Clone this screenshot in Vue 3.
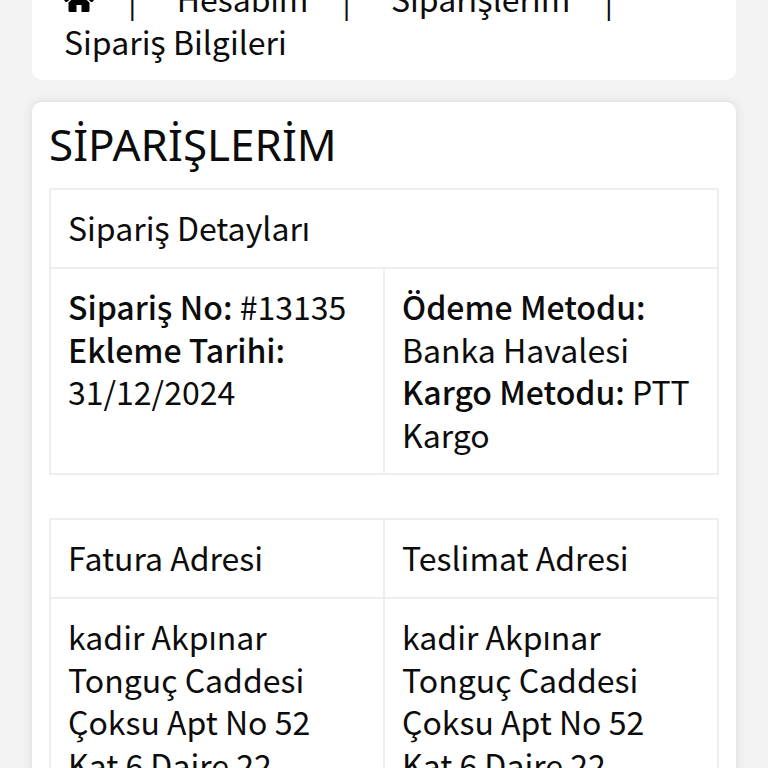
<script setup>
const crumbs = ['Hesabım', 'Siparişlerim', 'Sipariş Bilgileri']

const info = [
    [
        { label: 'Sipariş No:', value: '#13135' },
        { label: 'Ekleme Tarihi:', value: '31/12/2024' },
    ],
    [
        { label: 'Ödeme Metodu:', value: 'Banka Havalesi' },
        { label: 'Kargo Metodu:', value: 'PTT Kargo' },
    ],
]

const address = ['kadir Akpınar', 'Tonguç Caddesi', 'Çoksu Apt No 52', 'Kat 6 Daire 22']
</script>

<template>
    <div class="page">
        <nav class="breadcrumb">
            <ul>
                <li>
                    <a href="#" aria-label="Anasayfa">
                        <svg class="home" viewBox="0 0 30 26">
                            <path d="M15 1 L0 14 L1.500 16 L3 16 L15 5.500 L27 16 L28.500 16 L30 14 L25 9.500 V2 H21 V6 Z" />
                            <path d="M15 7 L4.500 16.500 V24.500 Q4.500 26 6 26 H12.500 V19 H17.500 V26 H24 Q25.500 26 25.500 24.500 V16.500 Z" />
                        </svg>
                    </a>
                </li>
                <li v-for="crumb in crumbs" :key="crumb">
                    <a href="#">{{ crumb }}</a>
                </li>
            </ul>
        </nav>

        <main class="card">
            <h1>SİPARİŞLERİM</h1>

            <table>
                <thead>
                    <tr>
                        <th colspan="2">Sipariş Detayları</th>
                    </tr>
                </thead>
                <tbody>
                    <tr>
                        <td v-for="(col, i) in info" :key="i">
                            <div v-for="row in col" :key="row.label"><b>{{ row.label }}</b> {{ row.value }}</div>
                        </td>
                    </tr>
                </tbody>
            </table>

            <table>
                <thead>
                    <tr>
                        <th>Fatura Adresi</th>
                        <th>Teslimat Adresi</th>
                    </tr>
                </thead>
                <tbody>
                    <tr>
                        <td v-for="n in 2" :key="n">
                            <div v-for="line in address" :key="line">{{ line }}</div>
                        </td>
                    </tr>
                </tbody>
            </table>
        </main>
    </div>
</template>

<style>
body {
    margin: 0;
    background: #f3f3f3;
}
</style>

<style scoped>
.page {
    height: 100vh;
    overflow: hidden;
    padding: 0 32px;
    box-sizing: border-box;
    font-family: "Noto Sans CJK JP", "Noto Sans CJK SC", "Noto Sans", sans-serif;
    font-size: 32px;
    line-height: 1.333;
    color: #0c0c0c;
}

.breadcrumb {
    background: #fff;
    border-radius: 10px;
    margin-top: -23px;
    margin-bottom: 22px;
    padding: 0 32px 18px;
}

.breadcrumb ul {
    display: flex;
    flex-wrap: wrap;
    list-style: none;
    margin: 0;
    padding: 0;
}

.breadcrumb li:not(:last-child)::after {
    content: "|";
    margin: 0 40px 0 34px;
}

.breadcrumb a {
    color: #0c0c0c;
    text-decoration: none;
}

.home {
    width: 30px;
    height: 26px;
    fill: #000;
}

.card {
    background: #fff;
    border-radius: 10px;
    box-shadow: 0 0 12px rgba(0, 0, 0, 0.1);
    padding: 14px 17px 0;
}

/* Noto Sans has the dotted capital İ as one glyph */
h1 {
    margin: 0 0 16px;
    font-family: "Noto Sans", sans-serif;
    font-size: 44px;
    font-weight: 400;
    line-height: 56px;
}

table {
    width: 100%;
    table-layout: fixed;
    border-collapse: collapse;
    margin-bottom: 43px;
}

th,
td {
    border: 2px solid #eee;
    padding: 16px 17px 18px;
    font-weight: 400;
    text-align: left;
    vertical-align: top;
}

b {
    font-weight: 500;
}
</style>
